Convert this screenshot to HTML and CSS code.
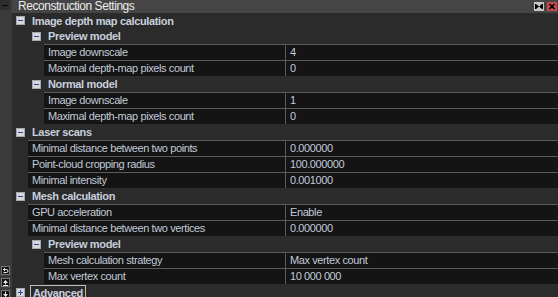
FILE: index.html
```
<html>
	<head>
		<link rel="stylesheet" href="styles.css">
	</head>
	<body>
		<div class="panel">
			<div class="side">
				<div class="sideBtn"><span></span></div>
				<div class="tools">
					<svg width="9" height="9" viewBox="0 0 9 9"><rect x="0.5" y="0.5" width="8" height="8" fill="#111" stroke="#777"/><path d="M2.5 3.5h3a1.5 1.5 0 0 1 0 3h-3" fill="none" stroke="#eee"/><path d="M2 3.5l2-2v4z" fill="#eee"/></svg>
					<svg width="9" height="9" viewBox="0 0 9 9"><rect x="0.5" y="0.5" width="8" height="8" fill="#111" stroke="#777"/><path d="M4.5 2l-2.5 3h5z M4 5h1v1.5h-1z" fill="#eee"/><path d="M2 7.5h5" stroke="#eee"/></svg>
					<svg width="9" height="9" viewBox="0 0 9 9"><rect x="0.5" y="0.5" width="8" height="8" fill="#111" stroke="#777"/><path d="M4.5 7l-2.5-3h5z M4 1.5h1v2.5h-1z" fill="#eee"/></svg>
				</div>
			</div>
			<div class="main">
				<div class="title">
					<span class="titleText">Reconstruction Settings</span>
					<span class="winBtn grey"><svg width="10" height="9" viewBox="0 0 10 9"><path d="M1 2h1v5h-1z M8 2h1v5h-1z M2 2l3 2.5l-3 2.5z M8 2l-3 2.5l3 2.5z" fill="#000"/></svg></span>
					<span class="winBtn red"><svg width="10" height="9" viewBox="0 0 10 9"><path d="M2.5 2l5 5M7.5 2l-5 5" stroke="#000" stroke-width="1.6"/></svg></span>
				</div>
				<div class="tree">
					<div class="head lvl1 first"><svg class="exp" width="9" height="9" viewBox="0 0 9 9"><rect x="0.5" y="0.5" width="8" height="8" fill="#d6d6dc" stroke="#a8a8b0"/><path d="M2 4.5h5" stroke="#2c4a9c"/></svg><span>Image depth map calculation</span></div>
					<div class="head lvl2"><svg class="exp" width="9" height="9" viewBox="0 0 9 9"><rect x="0.5" y="0.5" width="8" height="8" fill="#d6d6dc" stroke="#a8a8b0"/><path d="M2 4.5h5" stroke="#2c4a9c"/></svg><span>Preview model</span></div>
					<div class="row in2"><div class="label">Image downscale</div><div class="value">4</div></div>
					<div class="row in2"><div class="label">Maximal depth-map pixels count</div><div class="value">0</div></div>
					<div class="head lvl2"><svg class="exp" width="9" height="9" viewBox="0 0 9 9"><rect x="0.5" y="0.5" width="8" height="8" fill="#d6d6dc" stroke="#a8a8b0"/><path d="M2 4.5h5" stroke="#2c4a9c"/></svg><span>Normal model</span></div>
					<div class="row in2"><div class="label">Image downscale</div><div class="value">1</div></div>
					<div class="row in2"><div class="label">Maximal depth-map pixels count</div><div class="value">0</div></div>
					<div class="head lvl1"><svg class="exp" width="9" height="9" viewBox="0 0 9 9"><rect x="0.5" y="0.5" width="8" height="8" fill="#d6d6dc" stroke="#a8a8b0"/><path d="M2 4.5h5" stroke="#2c4a9c"/></svg><span>Laser scans</span></div>
					<div class="row in1"><div class="label">Minimal distance between two points</div><div class="value">0.000000</div></div>
					<div class="row in1"><div class="label">Point-cloud cropping radius</div><div class="value">100.000000</div></div>
					<div class="row in1"><div class="label">Minimal intensity</div><div class="value">0.001000</div></div>
					<div class="head lvl1"><svg class="exp" width="9" height="9" viewBox="0 0 9 9"><rect x="0.5" y="0.5" width="8" height="8" fill="#d6d6dc" stroke="#a8a8b0"/><path d="M2 4.5h5" stroke="#2c4a9c"/></svg><span>Mesh calculation</span></div>
					<div class="row in1"><div class="label">GPU acceleration</div><div class="value">Enable</div></div>
					<div class="row in1"><div class="label">Minimal distance between two vertices</div><div class="value">0.000000</div></div>
					<div class="head lvl2"><svg class="exp" width="9" height="9" viewBox="0 0 9 9"><rect x="0.5" y="0.5" width="8" height="8" fill="#d6d6dc" stroke="#a8a8b0"/><path d="M2 4.5h5" stroke="#2c4a9c"/></svg><span>Preview model</span></div>
					<div class="row in2"><div class="label">Mesh calculation strategy</div><div class="value">Max vertex count</div></div>
					<div class="row in2"><div class="label">Max vertex count</div><div class="value">10 000 000</div></div>
					<div class="head lvl1 adv"><svg class="exp" width="9" height="9" viewBox="0 0 9 9"><rect x="0.5" y="0.5" width="8" height="8" fill="#d6d6dc" stroke="#a8a8b0"/><path d="M2 4.5h5M4.5 2v5" stroke="#2c4a9c"/></svg><span class="focus">Advanced</span></div>
				</div>
			</div>
		</div>
	</body>
</html>
```

FILE: styles.css
```
body{
	margin:0;
	background-color:#2b2b2b;
	font-family: "Liberation Sans", Arial, sans-serif;
	font-size:11px;
	letter-spacing:-0.4px;
	color:#c2cad8;
	overflow:hidden;
}
.panel{
	display:flex;
	height:300px;
}
.side{
	width:12px;
	background-color:#3a3a3a;
	display:flex;
	flex-direction:column;
	justify-content:space-between;
}
.sideBtn{
	width:10px;
	height:10px;
	background-color:#2e2e2e;
	display:flex;
	align-items:center;
	justify-content:center;
}
.sideBtn span{
	width:6px;
	height:1px;
	background-color:#0a0a0a;
}
.tools{
	display:flex;
	flex-direction:column;
	gap:3px;
	padding-left:1px;
	margin-bottom:1px;
}
.tools svg{
	display:block;
}
.main{
	flex:1;
	display:flex;
	flex-direction:column;
}
.title{
	height:13px;
	background-color:#454545;
	display:flex;
	align-items:center;
	gap:3px;
	padding-right:1px;
}
.titleText{
	flex:1;
	padding-left:6px;
	font-size:12px;
	letter-spacing:-0.45px;
	color:#ececec;
	line-height:13px;
}
.winBtn{
	width:10px;
	height:9px;
	display:flex;
	margin-top:-1px;
}
.winBtn.grey{
	background-color:#c6c6c6;
}
.winBtn.red{
	background-color:#c54b4f;
}
.head{
	height:16px;
	display:flex;
	align-items:center;
	gap:7px;
	letter-spacing:-0.35px;
	font-weight:bold;
	color:#c8d0de;
}
.head.first{
	height:15px;
}
.lvl1{
	padding-left:4px;
}
.lvl2{
	padding-left:20px;
}
.exp{
	display:block;
	flex:none;
}
.row{
	height:16px;
	box-sizing:border-box;
	border-top:1px solid #5c5c5c;
	background-color:#141414;
	display:flex;
	line-height:15px;
}
.in1{
	margin-left:16px;
}
.in2{
	margin-left:32px;
}
.label{
	flex:1;
	padding-left:4px;
	white-space:nowrap;
	overflow:hidden;
}
.value{
	width:273px;
	box-sizing:border-box;
	border-left:1px solid #5c5c5c;
	padding-left:4px;
	white-space:nowrap;
}
.adv{
	align-items:flex-start;
	gap:5px;
}
.adv .exp{
	margin-top:4px;
}
.focus{
	border:1px solid #bdbdbd;
	padding:0 2px;
	margin-top:1px;
	line-height:14px;
}
```
